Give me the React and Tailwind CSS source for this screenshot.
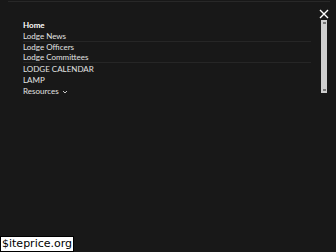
const items = [
  { label: 'Home', bold: true },
  { label: 'Lodge News' },
  { label: 'Lodge Officers', top: true },
  { label: 'Lodge Committees', bottom: true },
  { label: 'LODGE CALENDAR' },
  { label: 'LAMP' },
  { label: 'Resources', caret: true },
]

export default function App() {
  return (
    <main className="relative w-[336px] h-[252px] bg-[#181818] overflow-hidden" style={{ fontFamily: 'Lato, "Open Sans", sans-serif' }}>
      <div className="h-[2px] ml-[8px] mr-[6px] border-b border-[#282828]" />

      <div className="flex pt-[17px] pl-[23px] pr-[7px]">
        <ul className="flex-1 flex flex-col mr-[8px]">
          {items.map(item => (
            <li
              key={item.label}
              className={`h-[11px] flex items-center text-[8px] leading-none ${item.bold ? 'font-bold text-white' : 'text-[#e2e2e2]'} ${item.top ? 'border-t border-[#262626]' : ''} ${item.bottom ? 'border-b border-[#262626]' : ''}`}>
              {item.label}
              {item.caret && (
                <svg width="6" height="4" viewBox="0 0 6 4" className="ml-[3px] mt-[3px]">
                  <path d="M1 1 L3 3 L5 1" stroke="#ddd" strokeWidth="0.9" fill="none" />
                </svg>
              )}
            </li>
          ))}
        </ul>

        <div className="flex flex-col items-center -mt-[10px]">
          <svg width="10" height="10" viewBox="0 0 10 10">
            <path d="M1 1 L9 9 M9 1 L1 9" stroke="#fff" strokeWidth="1.4" />
          </svg>
          <div className="w-[6px] h-[73px] mt-[1px] bg-[#cfcfcf] flex flex-col justify-between items-center py-[2px]">
            <div className="w-[3px] h-[2px] bg-[#777]" />
            <div className="w-[3px] h-[2px] bg-[#777]" />
          </div>
        </div>
      </div>

      <div className="absolute left-0 bottom-0 h-[16px] px-[1px] bg-white border border-black flex items-center text-[11px] text-black" style={{ fontFamily: '"DejaVu Sans", sans-serif' }}>
        $iteprice.org
      </div>
    </main>
  )
}
